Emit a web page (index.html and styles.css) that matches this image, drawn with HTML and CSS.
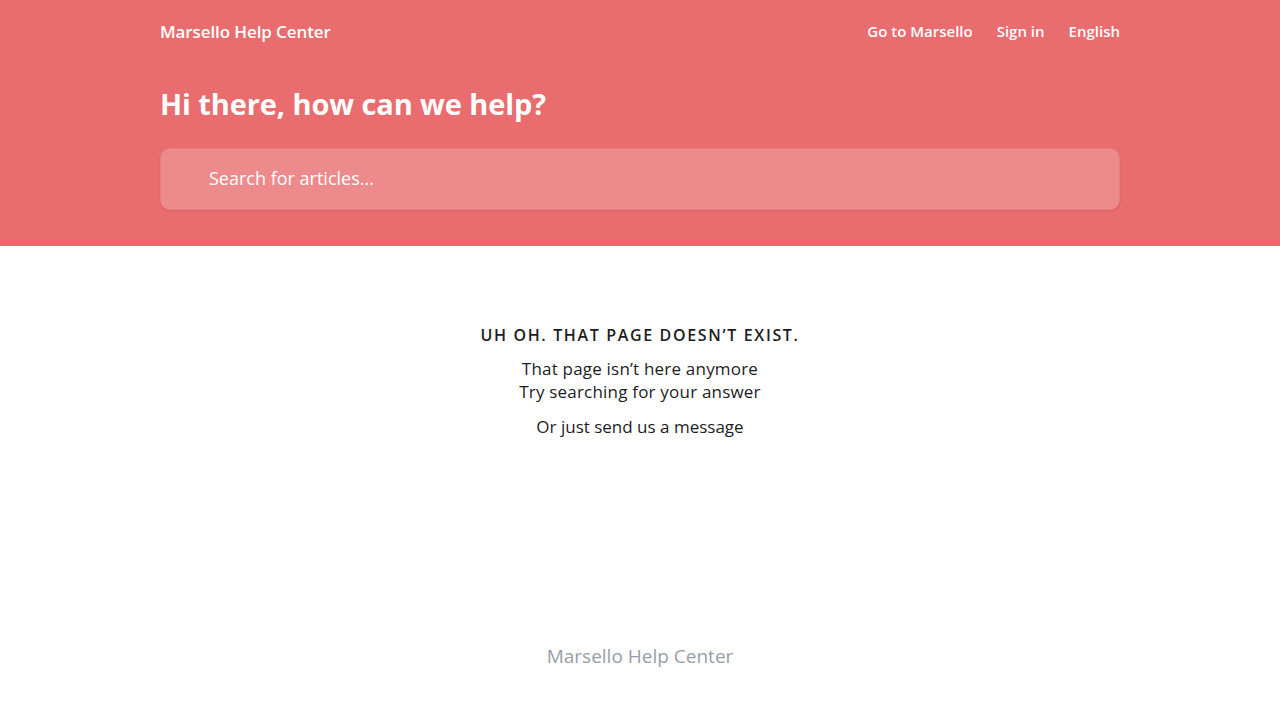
FILE: index.html
```html
<!DOCTYPE html>
<html lang="en">
<head>
<meta charset="utf-8">
<title>Marsello Help Center</title>
<link rel="stylesheet" href="styles.css">
</head>
<body>
<header class="hero">
  <div class="container">
    <nav class="nav">
      <a class="brand" href="#">Marsello Help Center</a>
      <div class="links">
        <a href="#">Go to Marsello</a>
        <a href="#">Sign in</a>
        <a href="#">English</a>
      </div>
    </nav>
    <h1 class="title">Hi there, how can we help?</h1>
    <div class="search">
      <span class="placeholder">Search for articles...</span>
    </div>
  </div>
</header>
<main class="content">
  <h2 class="err">UH OH. THAT PAGE DOESN’T EXIST.</h2>
  <p class="msg">That page isn’t here anymore<br>Try searching for your answer</p>
  <p class="msg2">Or just send us a message</p>
</main>
<footer class="footer">Marsello Help Center</footer>
</body>
</html>
```
FILE: styles.css
```css
* { box-sizing: border-box; }
html, body { margin: 0; padding: 0; }
body {
  font-family: "Open Sans", "Noto Sans", sans-serif;
  background: #fff;
  color: #1f1f1f;
  height: 720px;
  display: flex;
  flex-direction: column;
}
a { text-decoration: none; color: inherit; }
.hero {
  background: #e96c6e;
  color: #fff;
  height: 246px;
}
.container {
  width: 960px;
  margin: 0 auto;
}
.nav {
  height: 62px;
  display: flex;
  align-items: center;
  justify-content: space-between;
}
.brand {
  font-size: 17px;
  font-weight: 600;
  letter-spacing: -0.1px;
}
.links {
  display: flex;
  gap: 24px;
  font-size: 15px;
  font-weight: 600;
}
.title {
  margin: 12px 0 0;
  font-size: 29px;
  font-weight: 700;
  line-height: 60px;
  height: 60px;
  letter-spacing: -0.1px;
}
.search {
  margin-top: 14px;
  height: 62px;
  border-radius: 10px;
  background: #ed8a8b;
  border: 1px solid #e68183;
  box-shadow: 0 1px 2px rgba(160, 50, 50, 0.15);
  display: flex;
  align-items: center;
  padding-left: 48px;
  padding-bottom: 3px;
}
.placeholder {
  font-size: 18px;
  color: #fff;
}
.content {
  flex: 1;
  text-align: center;
  padding-top: 77px;
}
.err {
  margin: 0;
  font-size: 16px;
  font-weight: 600;
  letter-spacing: 1.65px;
  line-height: 24px;
  color: #1d1d1f;
}
.msg {
  margin: 10px 0 0;
  font-size: 17px;
  line-height: 23px;
  letter-spacing: 0.2px;
  color: #1d1d1f;
}
.msg2 {
  margin: 12px 0 0;
  font-size: 17px;
  line-height: 24px;
  color: #1d1d1f;
}
.footer {
  text-align: center;
  font-size: 19px;
  color: #979eaa;
  height: 78px;
  line-height: 28px;
}
```
